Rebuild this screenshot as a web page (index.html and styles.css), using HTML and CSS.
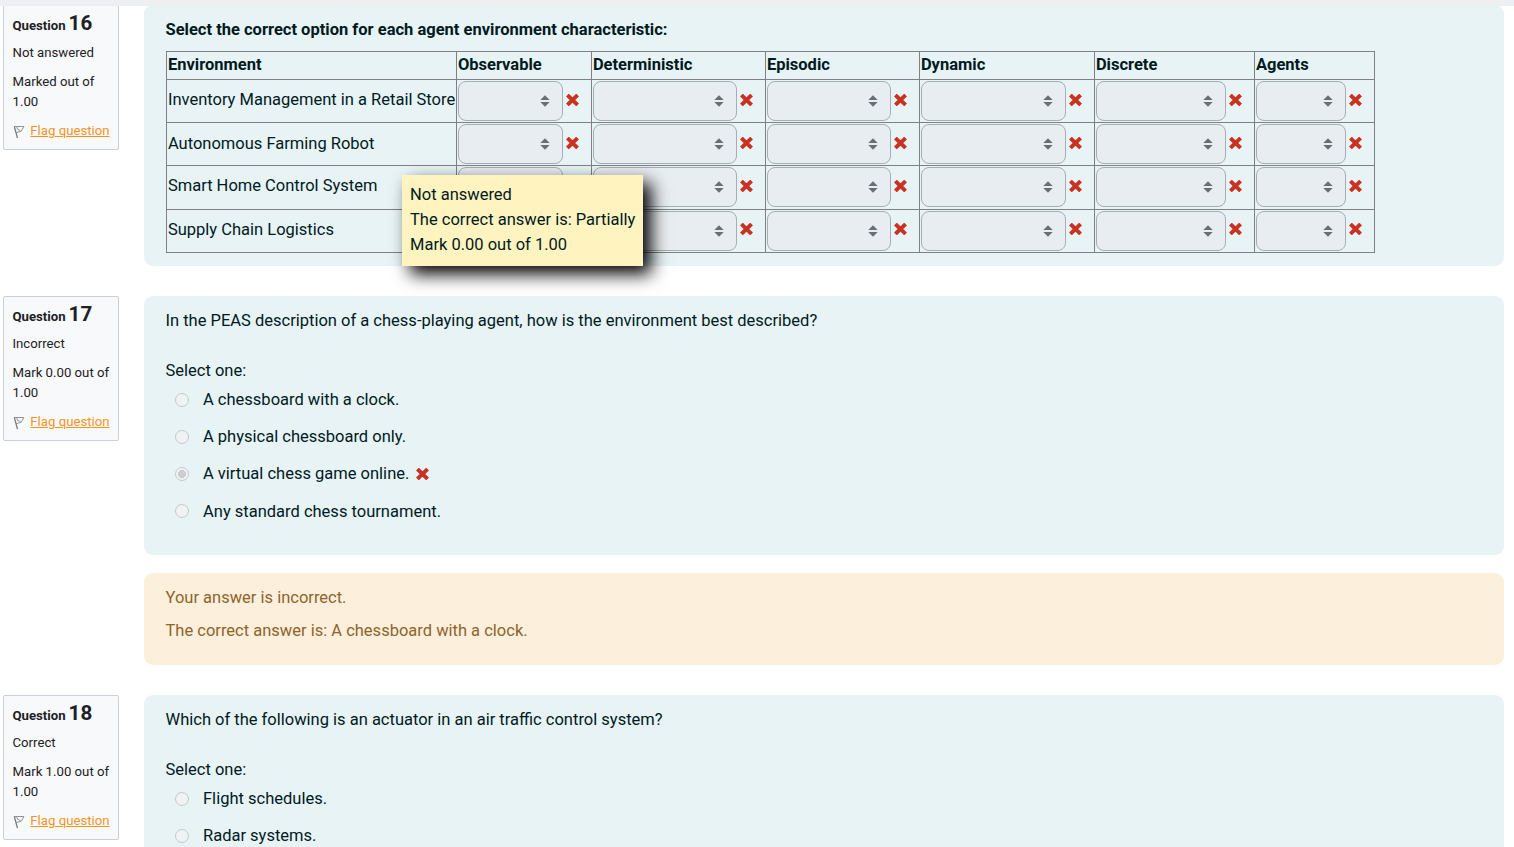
FILE: index.html
```html
<!DOCTYPE html>
<html lang="en">
<head>
<meta charset="utf-8">
<title>Quiz review</title>
<link rel="stylesheet" href="styles.css">
</head>
<body>
<svg class="defs" aria-hidden="true">
  <symbol id="flag" viewBox="0 0 12 14"><path d="M1.300 1.400 4.500 13.200" fill="none" stroke="#777" stroke-width="1.300"/><path d="M1.300 1.500 10.900 1.500 8.200 6.300 3 7.600M3.800 2 4.500 4.300 7.500 5.600" fill="none" stroke="#888" stroke-width=".9"/></symbol>
  <symbol id="cross" viewBox="0 0 13 12"><path d="M2.800 2.400 10.200 9.600M10.200 2.400 2.800 9.600" fill="none" stroke="#ca3120" stroke-width="3.900" stroke-linecap="square"/></symbol>
  <symbol id="sort" viewBox="0 0 10 12"><path d="M.3 5 5 .2 9.700 5zM.3 7 5 11.800 9.700 7z" fill="#6a6f74"/></symbol>
</svg>
<div class="topbar"></div>
<main class="quiz">
  <section class="question first">
    <aside class="info">
      <h3>Question <span>16</span></h3>
      <p>Not answered</p><p>Marked out of 1.00</p>
      <div class="flag"><svg><use href="#flag"/></svg><a href="#">Flag question</a></div>
    </aside>
    <div class="content">
      <div class="formulation matrix">
        <p class="prompt">Select the correct option for each agent environment characteristic:</p>
        <table>
          <colgroup><col class="c1"><col class="c2"><col class="c3"><col class="c4"><col class="c5"><col class="c6"><col class="c7"></colgroup>
          <thead><tr><th>Environment</th><th>Observable</th><th>Deterministic</th><th>Episodic</th><th>Dynamic</th><th>Discrete</th><th>Agents</th></tr></thead>
          <tbody id="rows"></tbody>
        </table>
        <div class="tooltip">Not answered<br>The correct answer is: Partially<br>Mark 0.00 out of 1.00</div>
      </div>
    </div>
  </section>
  <section class="question">
    <aside class="info">
      <h3>Question <span>17</span></h3>
      <p>Incorrect</p><p>Mark 0.00 out of 1.00</p>
      <div class="flag"><svg><use href="#flag"/></svg><a href="#">Flag question</a></div>
    </aside>
    <div class="content">
      <div class="formulation choice">
        <p class="text">In the PEAS description of a chess-playing agent, how is the environment best described?</p>
        <p class="select-one">Select one:</p>
        <ul class="options">
          <li><i class="radio"></i><span>A chessboard with a clock.</span></li>
          <li><i class="radio"></i><span>A physical chessboard only.</span></li>
          <li><i class="radio checked"></i><span>A virtual chess game online.</span><svg class="cross"><use href="#cross"/></svg></li>
          <li><i class="radio"></i><span>Any standard chess tournament.</span></li>
        </ul>
      </div>
      <div class="feedback"><p>Your answer is incorrect.</p><p>The correct answer is: A chessboard with a clock.</p></div>
    </div>
  </section>
  <section class="question last">
    <aside class="info">
      <h3>Question <span>18</span></h3>
      <p>Correct</p><p>Mark 1.00 out of 1.00</p>
      <div class="flag"><svg><use href="#flag"/></svg><a href="#">Flag question</a></div>
    </aside>
    <div class="content">
      <div class="formulation choice">
        <p class="text">Which of the following is an actuator in an air traffic control system?</p>
        <p class="select-one">Select one:</p>
        <ul class="options">
          <li><i class="radio"></i><span>Flight schedules.</span></li>
          <li><i class="radio"></i><span>Radar systems.</span></li>
        </ul>
      </div>
    </div>
  </section>
</main>
<script src="rows.js"></script>
</body>
</html>
```
FILE: rows.js
```js
const names = ["Inventory Management in a Retail Store", "Autonomous Farming Robot", "Smart Home Control System", "Supply Chain Logistics"];
const cell = '<td><div class="answer"><span class="select"><svg><use href="#sort"/></svg></span><svg class="cross"><use href="#cross"/></svg></div></td>';
document.getElementById("rows").innerHTML = names.map(n => `<tr><td>${n}</td>${cell.repeat(6)}</tr>`).join("");
```
FILE: styles.css
```css
* { box-sizing: border-box; }
html { overflow: hidden; }
body { margin: 0; height: 847px; overflow: hidden; background: #fff; font: 16.5px/25px Roboto, "Liberation Sans", sans-serif; color: #001a1e; }
p, h3, ul { margin: 0; padding: 0; }
.defs { display: block; width: 0; height: 0; }
.topbar { position: absolute; top: 0; left: 0; right: 0; height: 6px; background: #edeff2; z-index: 2; }
.quiz { height: 847px; overflow: hidden; padding: 5px 10px 0 3px; }
.question { display: flex; justify-content: space-between; align-items: flex-start; margin-bottom: 30px; }
.last { margin-bottom: 0; }
.info { width: 116px; height: 145px; padding: 5px 8px 0 8.5px; border: 1px solid #cad0d7; border-radius: 2px; background: #f8f9fb; color: #1d2125; font-size: 13.2px; line-height: 20px; }
.info h3 { font-size: 13.2px; line-height: 24px; font-weight: 700; white-space: nowrap; }
.info h3 span { font-size: 20.6px; margin-left: -.4px; }
.info p { margin-top: 5px; }
.info p + p { margin-top: 9px; }
.flag { display: flex; align-items: center; margin-top: 9px; white-space: nowrap; }
.flag svg { width: 12px; height: 14px; margin: 1px 5.8px 0 0; }
.flag a { color: #f7931e; }
.content { width: 1360px; }
.formulation { position: relative; border-radius: 9px; background: #e7f3f5; padding: 12px 21.5px 0; }
.matrix { height: 261px; }
.prompt { font-weight: 700; margin-bottom: 9px; letter-spacing: .005px; }
table { border-collapse: collapse; table-layout: fixed; width: 1209px; }
td, th { border: 1px solid gray; padding: 1px 1px 1px 1.4px; text-align: left; white-space: nowrap; }
th { height: 28px; padding-top: 0; padding-bottom: 2px; }
td { height: 43.25px; }
td:first-child { padding-bottom: 4px; }
tbody tr:nth-child(2) td { height: 43px; }
tbody tr:nth-child(2) td:first-child { padding-bottom: 2px; }
.c1 { width: 290px; } .c2 { width: 135px; } .c3 { width: 174px; } .c4 { width: 154px; } .c5 { width: 175px; } .c6 { width: 160px; } .c7 { width: 120px; }
.answer { display: flex; align-items: center; }
.select { display: flex; align-items: center; justify-content: flex-end; flex: 1; height: 40px; padding-right: 12.5px; border: 1px solid #a5adb5; border-radius: 8px; background: #e8edf1; }
.select svg { width: 10px; height: 12px; }
.cross { width: 13px; height: 12px; flex: none; }
.answer .cross { margin: 0 10.9px 3px 2.6px; }
.tooltip { position: absolute; left: 258px; top: 170px; width: 241px; height: 91px; padding: 7px 8px; background: #fff3bf; white-space: nowrap; box-shadow: 7.5px 7.5px 16.5px #000; }
.choice { height: 259px; }
.last .choice { height: 152px; border-radius: 9px 9px 0 0; }
.select-one { margin-top: 25px; }
.options { list-style: none; padding-left: 9px; margin-top: 4px; }
.options li { display: flex; align-items: center; height: 25px; margin-bottom: 12.2px; }
.last li:last-child { margin-bottom: 0; }
.radio { width: 14px; height: 14px; border: 1px solid #c6c9ca; border-radius: 50%; margin-right: 14.5px; background: #f0f3f4; }
.checked { background: radial-gradient(circle, #cbcccd 0 3.8px, #f0f3f4 4.3px); }
.options .cross { margin: 1px 0 0 6.5px; }
.feedback { height: 92px; margin-top: 18px; padding: 12px 21.5px; border-radius: 9px; background: #fcefdc; color: #8f642a; }
.feedback p + p { margin-top: 8px; }
```
